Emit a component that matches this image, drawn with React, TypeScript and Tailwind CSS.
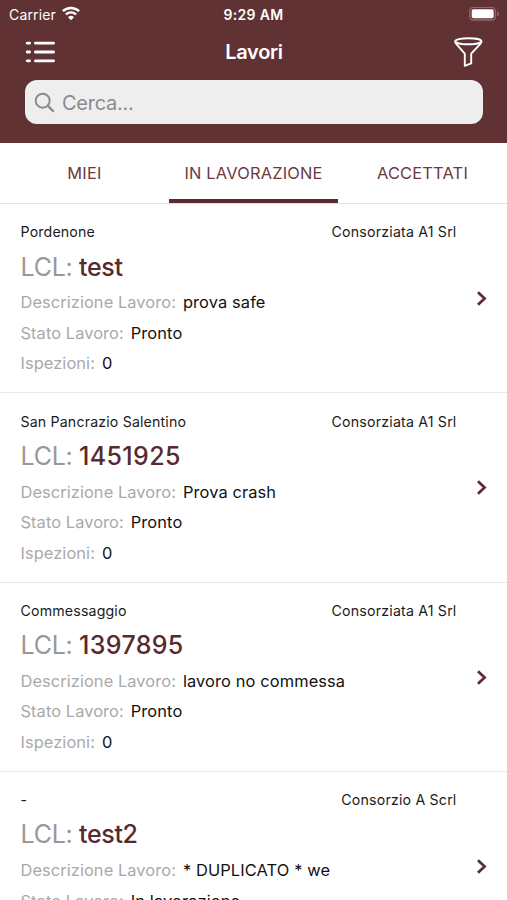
import clsx from "clsx";

interface IJob {
  place: string;
  company: string;
  lcl: string;
  description: string;
  status: string;
  inspections: number;
}

const JOBS: IJob[] = [
  {
    place: "Pordenone",
    company: "Consorziata A1 Srl",
    lcl: "test",
    description: "prova safe",
    status: "Pronto",
    inspections: 0,
  },
  {
    place: "San Pancrazio Salentino",
    company: "Consorziata A1 Srl",
    lcl: "1451925",
    description: "Prova crash",
    status: "Pronto",
    inspections: 0,
  },
  {
    place: "Commessaggio",
    company: "Consorziata A1 Srl",
    lcl: "1397895",
    description: "lavoro no commessa",
    status: "Pronto",
    inspections: 0,
  },
  {
    place: "-",
    company: "Consorzio A Scrl",
    lcl: "test2",
    description: "* DUPLICATO * we",
    status: "In lavorazione",
    inspections: 0,
  },
];

const TABS = ["MIEI", "IN LAVORAZIONE", "ACCETTATI"];

const WifiIcon = () => (
  <svg width="20" height="16" viewBox="0 0 20 16" fill="none">
    <path
      d="M1.9 5.2a11.6 11.6 0 0 1 16.2 0"
      stroke="currentColor"
      strokeWidth="2.5"
    />
    <path
      d="M4.9 8.5a7.3 7.3 0 0 1 10.2 0"
      stroke="currentColor"
      strokeWidth="2.4"
    />
    <path d="M10 14.3 7 11.2a4.3 4.3 0 0 1 6 0z" fill="currentColor" />
  </svg>
);

const BatteryIcon = () => (
  <svg width="31" height="14" viewBox="0 0 31 14" fill="none">
    <rect
      x="0.8"
      y="0.4"
      width="25.6"
      height="12.6"
      rx="3.6"
      stroke="#94696c"
      strokeWidth="1.3"
    />
    <rect x="2.7" y="2.3" width="22" height="9" rx="1.8" fill="white" />
    <path d="M28 4.4c2.6.8 2.6 3.8 0 4.6z" fill="#94696c" />
  </svg>
);

const ListIcon = () => (
  <svg width="30" height="22" viewBox="0 0 30 22" fill="none">
    <g stroke="currentColor" strokeWidth="2.8" strokeLinecap="round">
      <path d="M2.2 2.2h2.4M10.4 2.2h18.2" />
      <path d="M2.2 11h2.4M10.4 11h18.2" />
      <path d="M2.2 19.8h2.4M10.4 19.8h18.2" />
    </g>
  </svg>
);

const FunnelIcon = () => (
  <svg width="30" height="31" viewBox="0 0 30 31" fill="none">
    <g stroke="currentColor" strokeWidth="1.9" strokeLinejoin="round">
      <ellipse cx="15.3" cy="4.3" rx="13.1" ry="3" />
      <path d="M2.2 4.5c0 1.2.7 2 1.5 2.9l8.1 9.2v12.2l6.4-2.4v-9.8l8.7-9.2c.8-.9 1.5-1.7 1.5-2.9" />
    </g>
  </svg>
);

const SearchIcon = () => (
  <svg width="21" height="21" viewBox="0 0 21 21" fill="none">
    <circle cx="8.7" cy="8.7" r="7" stroke="currentColor" strokeWidth="1.9" />
    <path d="m13.9 13.9 5.8 5.8" stroke="currentColor" strokeWidth="2.3" />
  </svg>
);

const ChevronIcon = () => (
  <svg width="12" height="16" viewBox="0 0 12 16" fill="none">
    <path d="m2 2.2 6.6 6.3L2 14.8" stroke="currentColor" strokeWidth="2.7" />
  </svg>
);

const Field = ({ label, value }: { label: string; value: string | number }) => (
  <div className="flex h-[30.5px] items-center gap-[7px] whitespace-nowrap text-[16.4px]">
    <span className="tracking-[0.08px] text-[#a9a9a9]">{label}:</span>
    <span className="tracking-[0.12px] text-[#111111]">{value}</span>
  </div>
);

const JobRow = ({ job }: { job: IJob }) => (
  <li className="flex h-[189.33px] items-center border-b-[1.5px] border-[#e7e7e7] pl-[20.5px] pr-[19px]">
    <div className="h-full flex-1 pt-[18px]">
      <div className="flex h-5 items-center justify-between pr-[19.5px] text-[14.2px] tracking-[0.15px] text-[#1c1c1c]">
        <span>{job.place}</span>
        <span className="tracking-[0.18px]">{job.company}</span>
      </div>
      <div className="mt-[8.25px] mb-[3px] flex h-[34px] items-center gap-[6.5px] text-[25px]">
        <span className="tracking-[-0.25px] text-[#989898]">LCL:</span>
        <span
          className={clsx(
            "font-medium text-[#572a2d]",
            /^\d+$/.test(job.lcl) ? "tracking-[0.35px]" : "tracking-[-0.35px]"
          )}
        >
          {job.lcl}
        </span>
      </div>
      <Field label="Descrizione Lavoro" value={job.description} />
      <Field label="Stato Lavoro" value={job.status} />
      <Field label="Ispezioni" value={job.inspections} />
    </div>
    <span className="text-[#5c2b31]">
      <ChevronIcon />
    </span>
  </li>
);

export default function App() {
  return (
    <div className="h-[900px] w-[507px] overflow-hidden bg-white font-['Inter','Liberation_Sans',sans-serif]">
      <header className="h-[142.5px] bg-[#603234] text-white">
        <div className="grid h-7 grid-cols-3 items-center pl-[9px] pr-[7px] text-[14px]">
          <div className="flex items-center gap-[5.5px] tracking-[0.15px]">
            <span>Carrier</span>
            <WifiIcon />
          </div>
          <span className="pr-[2px] text-center font-semibold tracking-[0.3px]">
            9:29 AM
          </span>
          <span className="flex justify-end">
            <BatteryIcon />
          </span>
        </div>
        <div className="grid h-12 grid-cols-3 items-center pl-[25px] pr-6">
          <button>
            <ListIcon />
          </button>
          <h1 className="text-center text-[20px] font-semibold tracking-[-0.3px]">
            Lavori
          </h1>
          <button className="flex justify-end">
            <FunnelIcon />
          </button>
        </div>
        <div className="mt-1 mr-[24.5px] ml-[25px] flex h-11 items-center gap-[7px] rounded-[12px] bg-[#eeeeee] pl-[9px] text-[#8a8a8d]">
          <SearchIcon />
          <span className="pt-px text-[20px] tracking-[-0.25px]">Cerca...</span>
        </div>
      </header>
      <nav className="grid h-[61.5px] grid-cols-3 border-b border-[#e2e2e2]">
        {TABS.map((tab) => (
          <button
            key={tab}
            className={clsx(
              "flex items-center justify-center border-y-4 border-t-transparent pt-[1.5px] text-[16.4px] tracking-[0.2px] whitespace-nowrap text-[#6b393e]",
              tab === "IN LAVORAZIONE"
                ? "border-b-[#5c2b30]"
                : "border-b-transparent"
            )}
          >
            {tab}
          </button>
        ))}
      </nav>
      <ul>
        {JOBS.map((job) => (
          <JobRow key={job.lcl} job={job} />
        ))}
      </ul>
    </div>
  );
}
